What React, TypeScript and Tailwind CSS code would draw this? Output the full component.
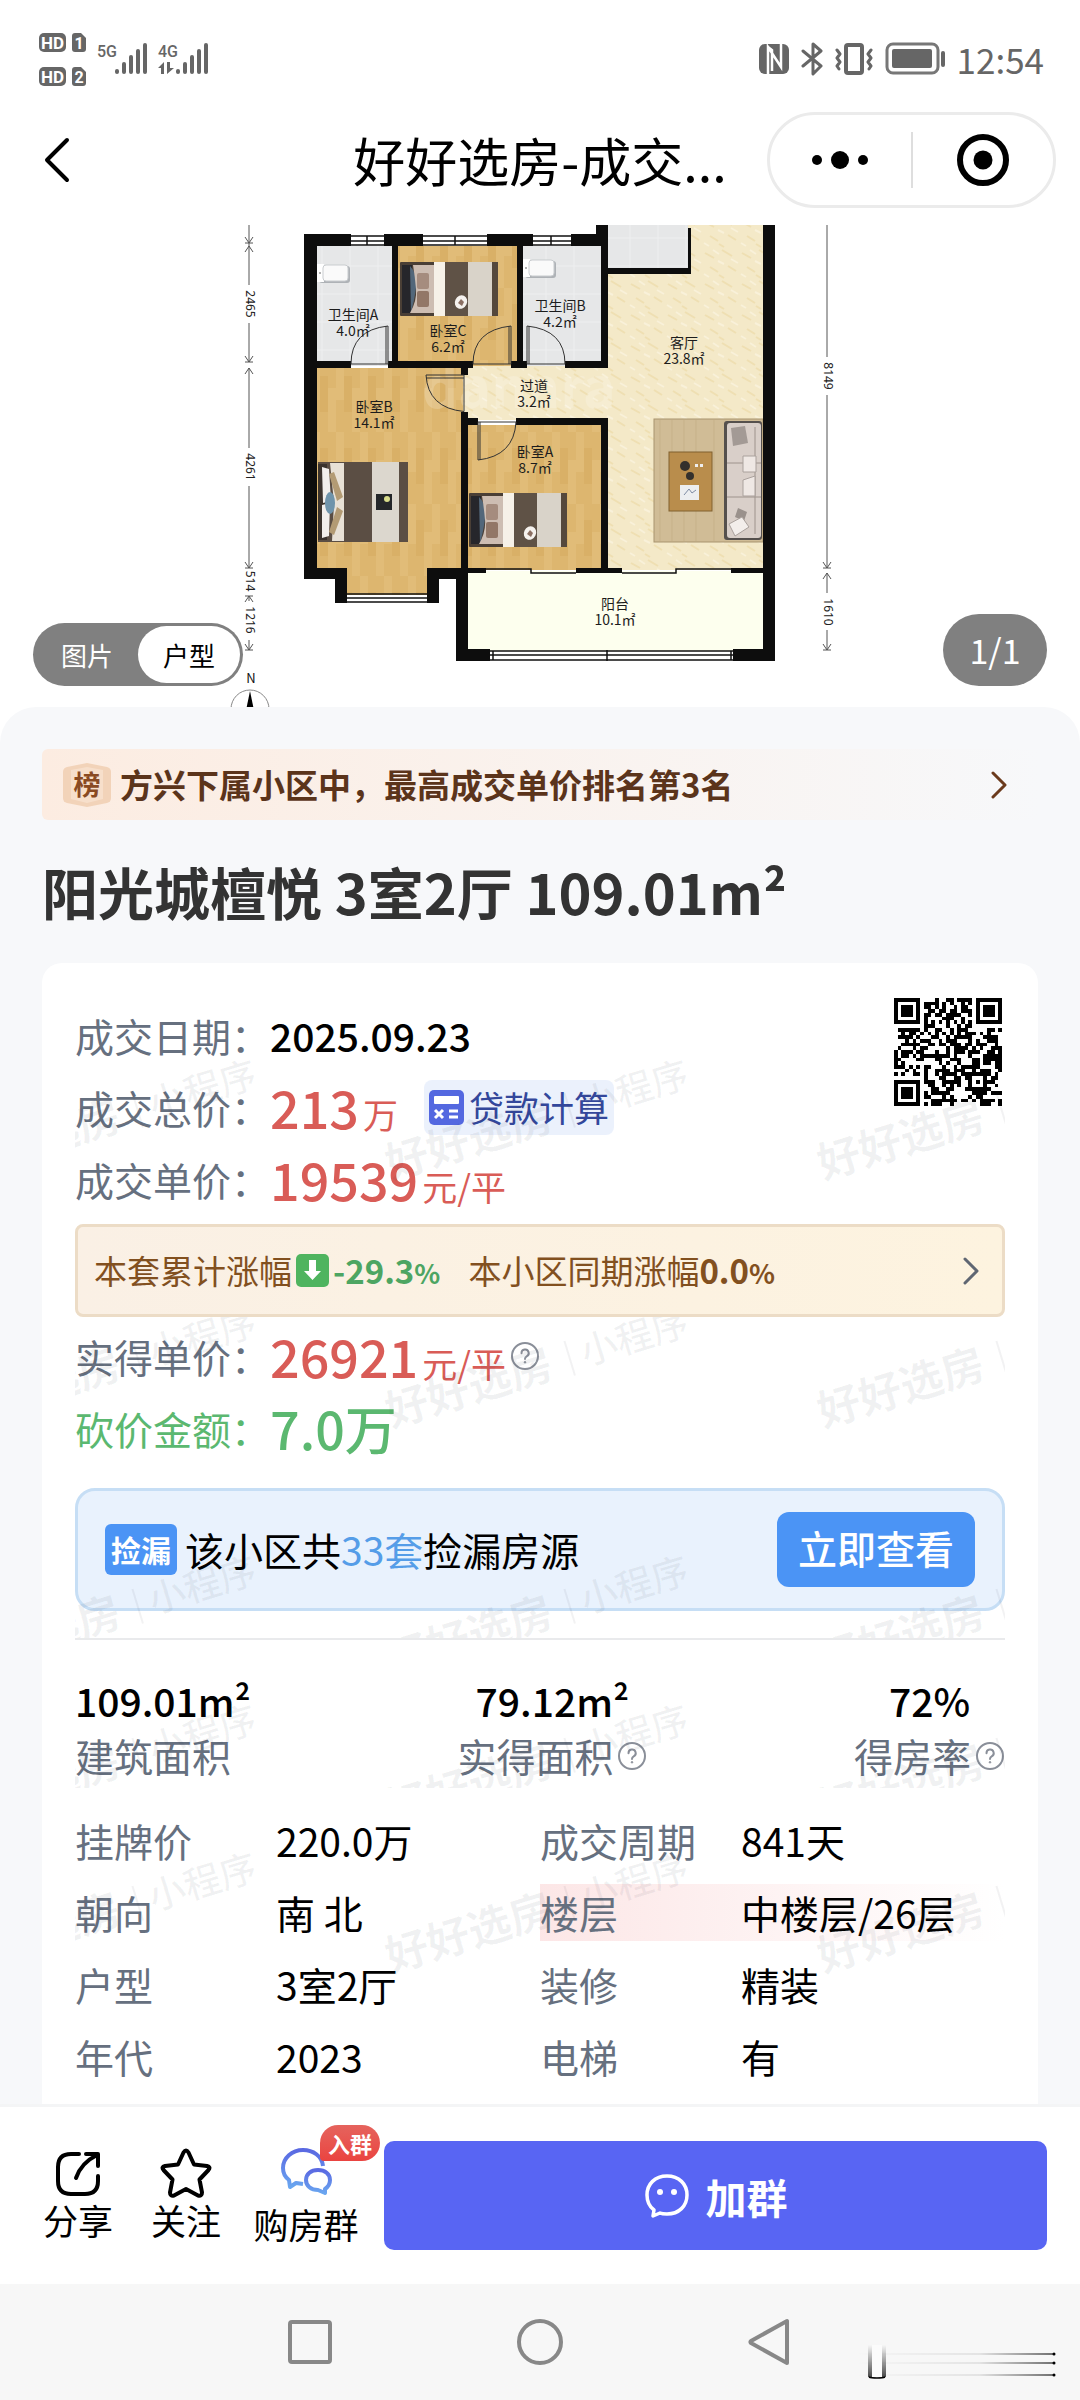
import type { ReactNode } from "react";
import { clsx } from "clsx";

const dealRows = [
  { label: "挂牌价", value: "220.0万" },
  { label: "成交周期", value: "841天" },
  { label: "朝向", value: "南 北" },
  { label: "楼层", value: "中楼层/26层", highlight: true },
  { label: "户型", value: "3室2厅" },
  { label: "装修", value: "精装" },
  { label: "年代", value: "2023" },
  { label: "电梯", value: "有" },
];

const rooms = [
  { name: "卫生间A", area: "4.0㎡", x: 353, y: 320 },
  { name: "卧室C", area: "6.2㎡", x: 448, y: 336 },
  { name: "卫生间B", area: "4.2㎡", x: 560, y: 311 },
  { name: "客厅", area: "23.8㎡", x: 684, y: 348 },
  { name: "过道", area: "3.2㎡", x: 534, y: 391 },
  { name: "卧室B", area: "14.1㎡", x: 374, y: 412 },
  { name: "卧室A", area: "8.7㎡", x: 535, y: 457 },
  { name: "阳台", area: "10.1㎡", x: 615, y: 609 },
];

// x, y, width, height
const walls = [
  [304, 234, 13, 345], [304, 234, 47, 12], [384, 234, 39, 12], [487, 234, 46, 12], [571, 234, 37, 12],
  [596, 225, 12, 21], [392, 246, 6, 122], [517, 246, 6, 122], [601, 225, 7, 143],
  [317, 361, 34, 7], [388, 361, 85, 7], [511, 361, 16, 7], [565, 361, 43, 7],
  [461, 368, 7, 7], [461, 412, 7, 160], [468, 418, 10, 7], [516, 418, 92, 7], [601, 418, 7, 155],
  [608, 268, 83, 6], [688, 228, 3, 44], [763, 225, 12, 436],
  [304, 568, 43, 11], [335, 568, 12, 35], [427, 568, 41, 11], [427, 568, 12, 35], [456, 568, 12, 93],
  [461, 568, 25, 5], [576, 568, 46, 5], [731, 568, 32, 5], [456, 649, 34, 12], [733, 649, 42, 12],
];

const QR_SIZE = 29;

function isDark(x: number, y: number) {
  const finder = (fx: number, fy: number) => {
    const d = Math.max(Math.abs(x - fx), Math.abs(y - fy));
    return d > 4 ? null : d !== 2 && d !== 4;
  };
  for (const [fx, fy] of [[3, 3], [25, 3], [3, 25]]) {
    const hit = finder(fx, fy);
    if (hit !== null) return hit;
  }
  const a = Math.max(Math.abs(x - 22), Math.abs(y - 22));
  if (a <= 2) return a !== 1;
  if (x === 6 || y === 6) return (x + y) % 2 === 0;
  const n = Math.sin(x * 127.1 + y * 311.7) * 43758.5453;
  return n - Math.floor(n) > 0.47;
}

function QrCode() {
  const cells: string[] = [];
  for (let y = 0; y < QR_SIZE; y++) {
    for (let x = 0; x < QR_SIZE; x++) {
      if (isDark(x, y)) cells.push(`M${x} ${y}h1v1h-1z`);
    }
  }
  return (
    <svg className="mt-[3px] mr-[3px] size-[108px] shrink-0" viewBox="0 0 29 29" shapeRendering="crispEdges">
      <path d={cells.join("")} fill="#000" />
    </svg>
  );
}

function Watermark({ rows = 1 }: { rows?: number }) {
  return (
    <svg className="pointer-events-none absolute inset-0 h-full w-full" aria-hidden="true">
      {[145, 393, 641].slice(0, rows).map((y) =>
        [-38, 394, 826].map((x) => (
          <g key={`${x}-${y}`} transform={`translate(${x} ${y}) rotate(-17)`} fill="#1e293b" fillOpacity="0.06" textAnchor="middle">
            <text y="15" fontSize="43" fontWeight="700">好好选房</text>
            <rect x="104" y="-17" width="2" height="36" />
            <text x="173" y="13" fontSize="37" fontWeight="500">小程序</text>
          </g>
        ))
      )}
    </svg>
  );
}

function Help() {
  return (
    <svg className="size-[30px] shrink-0" viewBox="0 0 30 30" fill="none" stroke="#8a8f99" strokeWidth="2">
      <circle cx="15" cy="15" r="13" />
      <path d="M11.5 12.2a3.6 3.6 0 1 1 5.2 3.1c-1.2.7-1.7 1.3-1.7 2.7" strokeLinecap="round" />
      <circle cx="15" cy="21.3" r="0.8" fill="#8a8f99" strokeWidth="1" />
    </svg>
  );
}

function Chevron({ color }: { color: string }) {
  return (
    <svg className="h-[28px] w-[18px] shrink-0" viewBox="0 0 18 28" fill="none" stroke={color} strokeWidth="3" strokeLinecap="round" strokeLinejoin="round">
      <path d="M3 2l12 12L3 26" />
    </svg>
  );
}

function Bed({ x, y }: { x: number; y: number }) {
  return (
    <g transform={`translate(${x} ${y})`}>
      <rect width="98" height="54" rx="1" fill="#4a3f36" />
      <rect x="2" y="3" width="10" height="48" fill="#26262b" />
      <path d="M10 4q8 8 6 22t-5 24z" fill="#52677a" />
      <path d="M13 3h21v48H10q7-12 6-24t-3-24z" fill="#cdbdb2" />
      <rect x="17" y="11" width="12" height="16" rx="2" fill="#a58c7e" />
      <rect x="17" y="29" width="12" height="16" rx="2" fill="#927767" />
      <rect x="34" width="11" height="54" fill="#f6f1e8" />
      <rect x="45" width="23" height="54" fill="#5f5246" />
      <rect x="68" width="24" height="54" fill="#d9d3c9" />
      <rect x="92" width="6" height="54" fill="#55483c" />
      <ellipse cx="61" cy="40" rx="6" ry="7" fill="#f5f2ee" transform="rotate(25 61 40)" />
      <path d="M58 41l3-4 3 3-2 4z" fill="#8b6f62" />
    </g>
  );
}

function Toilet({ x, y }: { x: number; y: number }) {
  return (
    <g transform={`translate(${x} ${y})`}>
      <rect x="2" y="2" width="31" height="17" rx="3" fill="#aeb2b6" />
      <rect width="7" height="18" fill="#fff" />
      <rect x="6" y="1" width="25" height="16" rx="3" fill="#fafafa" stroke="#c9cccf" />
      <circle cx="3" cy="9" r="1" fill="#999" />
    </g>
  );
}

function Dimension({ x, y, children }: { x: number; y: number; children: ReactNode }) {
  return (
    <text transform={`translate(${x - 3} ${y}) rotate(90)`} textAnchor="middle" fontSize="12" fill="#222" fontFamily="'Noto Sans', sans-serif">
      {children}
    </text>
  );
}

function FloorPlan() {
  return (
    <svg className="h-[482px] w-[640px]" viewBox="220 225 640 482" role="img" aria-label="户型图">
      <defs>
        <pattern id="wood" width="24" height="72" patternUnits="userSpaceOnUse">
          <rect width="24" height="72" fill="#ddb66f" />
          <path d="M0 0h8v40H0zM16 28h8v44h-8z" fill="#e1bc78" />
          <path d="M8 16h8v36H8z" fill="#d9b067" />
        </pattern>
        <pattern id="tile" width="28" height="28" patternUnits="userSpaceOnUse">
          <rect width="28" height="28" fill="#e6e7e8" />
          <path d="M0 14h28M14 0v28" stroke="#eff0f1" />
        </pattern>
        <pattern id="marble" width="37" height="31" patternUnits="userSpaceOnUse">
          <rect width="37" height="31" fill="#f4e9c8" />
          <path d="M2 5l9 5M19 2l10 6M7 19l8 5M25 18l8 5M16 27l5 3" stroke="#efdfb2" strokeWidth="2" />
          <path d="M10 2l6 4M1 26l5 3M28 11l7 4M15 13l6 3" stroke="#f9f1d9" strokeWidth="2" />
        </pattern>
      </defs>

      {/* floors */}
      <rect x="317" y="368" width="146" height="200" fill="url(#wood)" />
      <rect x="347" y="560" width="80" height="35" fill="url(#wood)" />
      <rect x="398" y="246" width="120" height="120" fill="url(#wood)" />
      <rect x="468" y="425" width="134" height="145" fill="url(#wood)" />
      <rect x="317" y="246" width="76" height="120" fill="url(#tile)" />
      <rect x="523" y="246" width="79" height="120" fill="url(#tile)" />
      <rect x="608" y="225" width="155" height="345" fill="url(#marble)" />
      <rect x="463" y="366" width="146" height="54" fill="url(#marble)" />
      <rect x="608" y="225" width="80" height="44" fill="url(#tile)" />
      <rect x="468" y="571" width="295" height="80" fill="#fdffee" />

      {/* furniture */}
      <Toilet x={317} y={264} />
      <Toilet x={523} y={259} />
      <Bed x={400} y={262} />
      <Bed x={469} y={493} />
      <rect x="318" y="462" width="90" height="80" fill="#5b4e44" />
      <rect x="318" y="464" width="9" height="76" fill="#3b332d" />
      <path d="M322 467l7 2 2 32-8 2zM322 505l8-2-1 33-7 2z" fill="#f2efec" />
      <path d="M330 463h14v78h-12l2-38z" fill="#e8e1d6" />
      <path d="M329 474l5-2 9 25-6 4zM337 507l6 4-9 24-5-3z" fill="#b39b74" />
      <ellipse cx="330" cy="503" rx="5" ry="11" fill="#6f94ab" />
      <rect x="372" y="462" width="27" height="80" fill="#dcd7ce" />
      <rect x="376" y="494" width="16" height="16" fill="#25272a" />
      <circle cx="387" cy="499" r="3" fill="#d9dd8c" />
      <rect x="654" y="419" width="109" height="123" fill="#d0bc96" stroke="#a8946e" />
      <path d="M660 420v121M672 420v121M684 420v121M696 420v121M714 420v121" stroke="#c6b189" />
      <rect x="669" y="452" width="43" height="59" fill="#b98d4c" stroke="#80602f" />
      <circle cx="685" cy="466" r="5" fill="#34302c" />
      <circle cx="690" cy="476" r="4" fill="#34302c" />
      <path d="M695 464h3v3h-3zM700 464h3v3h-3z" fill="#eee" />
      <rect x="680" y="485" width="19" height="15" fill="#eceef0" />
      <path d="M684 495l5-6 3 4 4-3" stroke="#7d8ba3" fill="none" />
      <rect x="724" y="421" width="38" height="119" rx="3" fill="#55504d" />
      <rect x="727" y="423" width="34" height="115" rx="3" fill="#d9cfc9" />
      <path d="M727 463h34M727 497h34M755 427v107" stroke="#9e938c" />
      <path d="M731 428l14-2 3 17-15 3z" fill="#a39a95" />
      <path d="M743 456h13v16h-13zM743 480l12-4v20h-12z" fill="#efe8e4" stroke="#aaa19c" />
      <path d="M738 508l9 4-3 9-9-4z" fill="#9a918c" />
      <path d="M729 524l13-7 7 10-14 9z" fill="#f3eeeb" stroke="#aaa19c" />

      {/* faint stamp across the hallway */}
      <text x="422" y="408" fontSize="56" fontWeight="700" fill="#fff" fillOpacity="0.18">danara</text>

      <g fill="#0d0d0d">
        {walls.map(([x, y, w, h]) => (
          <rect key={`${x}-${y}-${w}-${h}`} x={x} y={y} width={w} height={h} />
        ))}
      </g>

      {/* windows */}
      <g fill="none" stroke="#111" strokeWidth="1.5">
        <path d="M351 236h33M351 241h33M351 245h33M367 236v9" />
        <path d="M423 236h64M423 241h64M423 245h64M455 236v9" />
        <path d="M533 236h38M533 241h38M533 245h38M551 236v9" />
        <path d="M347 594h80M347 598h80M347 602h80" />
        <path d="M486 569h45v4h45M622 573h54v-4h55" />
        <path d="M490 651h243M490 655h243M490 660h243M493 651v9M607 650v11M731 651v9" />
      </g>

      {/* doors */}
      <g fill="none" stroke="#333" strokeWidth="1">
        <path d="M351 364h37v-38M388 326q-37 4-37 38M386 326v38" />
        <path d="M473 364h38v-38M511 326q-38 4-38 38M509 326v38" />
        <path d="M565 364h-38v-38M527 326q38 4 38 38M529 326v38" />
        <path d="M464 375h-38M426 375q2 33 38 36.500V375M426 378h38" />
        <path d="M478 422h38M478 422v38q36-4 38-38M480 422v38" />
      </g>

      <g fontSize="14" textAnchor="middle" fill="#1c1c1c">
        {rooms.map((room) => (
          <text key={room.name} x={room.x} y={room.y}>
            {room.name}
            <tspan x={room.x} dy="16">{room.area}</tspan>
          </text>
        ))}
      </g>

      {/* dimension lines */}
      <g fill="none" stroke="#555" strokeWidth="1">
        <path d="M249 225v60M249 323v39M249 368v80M249 486v82M249 596v5M249 640v10" />
        <path d="M245 237l4 6 4-6M245 243h8M245 252l4-6 4 6M245 356l4 6 4-6M245 362h8M245 374l4-6 4 6M245 562l4 6 4-6M245 568h8M245 602l4-6 4 6M245 596h8M245 644l4 6 4-6M245 650h8" />
        <path d="M827 225v132M827 395v173M827 573v20M827 630v20" />
        <path d="M823 562l4 6 4-6M823 568h8M823 579l4-6 4 6M823 644l4 6 4-6M823 650h8" />
      </g>
      <Dimension x={249} y={304}>2465</Dimension>
      <Dimension x={249} y={467}>4261</Dimension>
      <Dimension x={249} y={581}>514</Dimension>
      <Dimension x={249} y={620}>1216</Dimension>
      <Dimension x={827} y={376}>8149</Dimension>
      <Dimension x={827} y={612}>1610</Dimension>

      <text x="251" y="683" fontSize="13" textAnchor="middle" fill="#111">N</text>
      <circle cx="250" cy="709" r="19" fill="none" stroke="#888" />
      <path d="M250 691l3.500 17h-7z" fill="#000" />
    </svg>
  );
}

function StatusBar() {
  return (
    <div className="flex h-[105px] items-center justify-between pt-3 pr-9 pl-9">
      <svg className="h-[60px] w-[176px]" viewBox="36 28 176 60" fill="#666">
        {[32, 66].map((y, i) => (
          <g key={y} fontWeight="700" textAnchor="middle" fontFamily="Roboto, sans-serif">
            <rect x="39" y={y} width="27" height="19" rx="5" />
            <text x="52.500" y={y + 15.5} fontSize="17" fill="#fff">HD</text>
            <path d={`M75 ${y}h6l5 5v11a3 3 0 0 1-3 3h-8a3 3 0 0 1-3-3v-13a3 3 0 0 1 3-3z`} />
            <text x="79" y={y + 15.5} fontSize="16" fill="#fff">{i + 1}</text>
          </g>
        ))}
        <g fontSize="16" fontWeight="500" fontFamily="Roboto, sans-serif">
          <text x="97" y="56">5G</text>
          <text x="158" y="56">4G</text>
        </g>
        {[115, 176].map((x) =>
          [5, 12, 19, 25, 31].map((h, i) => (
            <rect key={`${x}-${h}`} x={x + i * 7} y={73 - h} width="4" height={h} rx="2" />
          ))
        )}
        <path d="M158 67l6-6v12h-3v-6zM167 61h3v6h4l-7 6z" />
      </svg>

      <div className="flex items-center gap-3 text-[#666]">
        <svg className="h-[34px] w-[30px]" viewBox="0 0 30 34">
          <rect y="2" width="30" height="30" rx="6" fill="#666" />
          <path d="M9 32V5l13 20V8M9 5l4 3v21M22 25V2" fill="none" stroke="#fff" strokeWidth="2.500" />
        </svg>
        <svg className="h-[34px] w-[22px]" viewBox="0 0 22 34" fill="none" stroke="#666" strokeWidth="3" strokeLinejoin="round" strokeLinecap="round">
          <path d="M2 9l18 15-8 8V2l8 7L2 24" />
        </svg>
        <svg className="h-[34px] w-[38px]" viewBox="0 0 38 34" fill="none" stroke="#666" strokeWidth="3" strokeLinejoin="round" strokeLinecap="round">
          <rect x="11" y="3" width="16" height="28" rx="2" strokeWidth="4" />
          <path d="M2 8l3 4-3 4 3 4-3 4 2 3M36 8l-3 4 3 4-3 4 3 4-2 3" />
        </svg>
        <svg className="h-[34px] w-[60px]" viewBox="0 0 60 34">
          <rect x="2" y="2" width="51" height="29" rx="6" fill="none" stroke="#777" strokeWidth="3" />
          <rect x="7" y="7" width="40" height="19" rx="2" fill="#666" />
          <rect x="56" y="9" width="4" height="16" rx="2" fill="#666" />
        </svg>
        <time className="text-[35px] leading-[46px]">12:54</time>
      </div>
    </div>
  );
}

function Header() {
  return (
    <header className="grid grid-cols-[1fr_auto_1fr] items-center px-6 pt-[7px] pb-[17px]">
      <button type="button" aria-label="返回" className="w-fit pl-[18px]">
        <svg className="h-[48px] w-[30px]" viewBox="0 0 30 48" fill="none" stroke="#000" strokeWidth="4" strokeLinecap="round" strokeLinejoin="round">
          <path d="M25 4L5 24l20 20" />
        </svg>
      </button>
      <h1 className="text-[52px] leading-[72px] text-black">好好选房-成交...</h1>
      <div className="flex h-24 w-[289px] items-center justify-self-end rounded-full border-[3px] border-[#ebebeb]">
        <button type="button" aria-label="更多" className="flex flex-1 justify-center">
          <svg className="h-[20px] w-[58px]" viewBox="0 0 58 20">
            <circle cx="6" cy="10" r="5" />
            <circle cx="29" cy="10" r="9" />
            <circle cx="52" cy="10" r="5" />
          </svg>
        </button>
        <span className="h-14 w-[2px] bg-[#dedede]" />
        <button type="button" aria-label="关闭" className="flex flex-1 justify-center">
          <svg className="size-[54px]" viewBox="0 0 54 54">
            <circle cx="27" cy="27" r="23" fill="none" stroke="#000" strokeWidth="6" />
            <circle cx="27" cy="27" r="9.500" />
          </svg>
        </button>
      </div>
    </header>
  );
}

function PriceRow({ label, labelClass, children }: { label: string; labelClass?: string; children: ReactNode }) {
  return (
    <div className="flex h-[72px] items-center">
      <dt className={clsx("w-[195px] shrink-0 whitespace-nowrap", labelClass ?? "text-[#66707f]")}>{label}：</dt>
      <dd className="flex items-center">{children}</dd>
    </div>
  );
}

function Price({ amount, unit }: { amount: string; unit: string }) {
  return (
    <span className="flex items-baseline gap-1 text-[#d95c57]">
      <b className="text-[52px] leading-[72px] font-medium">{amount}</b>
      <span className="text-[35px]">{unit}</span>
    </span>
  );
}

function BottomBar() {
  return (
    <footer className="flex items-start gap-6 border-t-[3px] border-[#f4f5f6] bg-white pt-[34px] pr-[33px] pb-[34px] pl-9 text-[35px] leading-[42px] text-black">
      <button type="button" className="flex w-[84px] shrink-0 flex-col items-center pt-1.5">
        <svg className="size-[52px]" viewBox="0 0 52 52" fill="none" stroke="#000" strokeWidth="4" strokeLinecap="round" strokeLinejoin="round">
          <path d="M27 7H19Q6 7 6 20v14q0 13 13 13h14q13 0 13-13v-5" />
          <path d="M24 31Q29 16 45 8M34 7h12v12" />
        </svg>
        分享
      </button>
      <button type="button" className="flex w-[84px] shrink-0 flex-col items-center pt-1.5">
        <svg className="size-[52px]" viewBox="0 0 52 52" fill="none" stroke="#000" strokeWidth="4" strokeLinejoin="round">
          <path d="M23.500 5.500q2.500-4 5 0l5.500 12 13 1.500q4 1 1.500 4l-9 9.500 2.500 13q0 4-4 3L26 42l-12 6.500q-4 1-4-3l2.500-13-9-9.500q-2.500-3 1.500-4l13-1.500z" />
        </svg>
        关注
      </button>
      <button type="button" className="relative flex w-[108px] shrink-0 flex-col items-center gap-1 pt-1.5">
        <svg className="size-[52px]" viewBox="0 0 52 52" fill="none" strokeWidth="4" strokeLinejoin="round">
          <defs>
            <linearGradient id="bubble" x1="0" y1="0" x2="0" y2="1">
              <stop offset="0" stopColor="#5a69e2" />
              <stop offset="1" stopColor="#6aa6f0" />
            </linearGradient>
          </defs>
          <path d="M43 19C42 9 33 3 23 3 12 3 3 11 3 21c0 5 2 9 6 12l1 7 6-4 7 1" stroke="url(#bubble)" />
          <path d="M45 42c3-2 5-5 5-9 0-6-5-10-12-10s-12 4-12 10 5 10 12 10l7 3z" stroke="url(#bubble)" />
        </svg>
        购房群
        <span className="absolute -top-4 -right-5 rounded-[18px] rounded-bl-sm bg-linear-to-b from-[#e5635d] to-[#ea4340] px-[8px] text-[22px] leading-9 font-bold text-white">
          入群
        </span>
      </button>
      <button type="button" className="flex h-[109px] flex-1 items-center justify-center gap-4 rounded-[10px] bg-[#5865f3] text-[41px] font-bold text-white">
        <svg className="size-[46px]" viewBox="0 0 46 46" fill="none" stroke="#fff" strokeWidth="3.500" strokeLinejoin="round">
          <path d="M23 3C11 3 3 11 3 22c0 7 3 12 7 15l-1 6 7-3c2 1 4 1 7 1 12 0 20-8 20-19S35 3 23 3z" />
          <circle cx="16" cy="19" r="3" fill="#fff" stroke="none" />
          <circle cx="30" cy="19" r="3" fill="#fff" stroke="none" />
        </svg>
        加群
      </button>
    </footer>
  );
}

function SystemNav() {
  return (
    <nav className="relative flex h-[116px] items-center justify-center gap-[186px] bg-[#f7f7f7]">
      <button type="button" aria-label="最近任务">
        <svg className="size-11" viewBox="0 0 44 44" fill="none" stroke="#888" strokeWidth="4">
          <rect x="2" y="2" width="40" height="40" rx="2" />
        </svg>
      </button>
      <button type="button" aria-label="主屏幕">
        <svg className="size-11 overflow-visible" viewBox="0 0 44 44" fill="none" stroke="#888" strokeWidth="4">
          <circle cx="22" cy="22" r="21" />
        </svg>
      </button>
      <button type="button" aria-label="返回上一级">
        <svg className="size-11 overflow-visible" viewBox="0 0 44 44" fill="none" stroke="#888" strokeWidth="4" strokeLinejoin="round">
          <path d="M39 1v42L3 23q-1-1 0-2z" />
        </svg>
      </button>
      <svg className="absolute right-6 bottom-4 h-[42px] w-[250px]" viewBox="0 0 250 42" aria-hidden="true">
        <defs>
          <linearGradient id="streak">
            <stop offset="0.200" stopColor="#000" stopOpacity="0" />
            <stop offset="0.700" stopColor="#000" stopOpacity="0.080" />
            <stop offset="1" stopColor="#000" stopOpacity="0.550" />
          </linearGradient>
          <linearGradient id="drip" x1="0" y1="0" x2="0" y2="1">
            <stop offset="0" stopColor="#000" stopOpacity="0" />
            <stop offset="1" stopColor="#000" stopOpacity="0.700" />
          </linearGradient>
        </defs>
        {[11, 20, 32].map((y) => (
          <g key={y}>
            <rect y={y} width="248" height="2" fill="url(#streak)" />
            <circle cx="248" cy={y + 1} r="1.500" />
          </g>
        ))}
        <rect x="66" y="3" width="10" height="32" fill="#fbfbfb" />
        <rect x="62" y="3" width="4" height="32" fill="url(#drip)" />
        <rect x="76" y="3" width="4" height="32" fill="url(#drip)" />
        <path d="M63 35q2 1 8 1t8-1" fill="none" stroke="#000" strokeWidth="1.500" />
      </svg>
    </nav>
  );
}

export default function App() {
  return (
    <div className="w-full bg-white font-['Noto_Sans_CJK_SC',sans-serif]">
      <StatusBar />
      <Header />

      <section className="relative flex justify-center overflow-hidden">
        <FloorPlan />
        <div className="absolute bottom-[21px] left-[33px] flex rounded-full bg-[#808080] p-[3px] text-[26px] leading-[57px]">
          <button type="button" className="w-[102px] text-white">图片</button>
          <button type="button" className="w-[102px] rounded-full bg-white text-black">户型</button>
        </div>
        <span className="absolute right-[33px] bottom-[21px] w-[104px] rounded-full bg-[#808080] text-center text-[34px] leading-[72px] text-white">
          1/1
        </span>
      </section>

      <main className="rounded-t-[36px] bg-[#f7f8fa] px-[42px] pt-[42px]">
        <a href="#rank" className="flex h-[71px] items-center rounded-md bg-linear-to-r from-[#fcece1] to-[#f7f8fa] pr-[30px] pl-5 text-[33px] font-bold text-[#5b341b]">
          <svg className="mr-2 h-[44px] w-[50px]" viewBox="0 0 50 44">
            <path d="M5 4L25 0l20 4q4 1 4 5v26q0 4-4 5L25 44 5 40q-4-1-4-5V9q0-4 4-5z" fill="#f2d3b9" />
            <path d="M9 7l16-3 16 3v29l-16 4-16-4z" fill="#f7dfcb" />
            <text x="25" y="32" fontSize="27" fontWeight="700" textAnchor="middle" fill="#8a4a22">榜</text>
          </svg>
          <span className="flex-1">方兴下属小区中，最高成交单价排名第3名</span>
          <Chevron color="#6b3a1c" />
        </a>

        <h2 className="mt-[31px] mb-8 text-[56px] leading-[80px] font-bold text-[#333]">阳光城檀悦 3室2厅 109.01m²</h2>

        <div className="rounded-t-[20px] bg-white px-[33px] pt-8 text-[39px]">
          <section className="relative overflow-hidden border-b-2 border-[#e9eaec] pb-[27px]">
            <Watermark rows={3} />
            <div className="flex">
              <dl className="flex-1 pt-1">
                <PriceRow label="成交日期">
                  <span className="font-medium text-black">2025.09.23</span>
                </PriceRow>
                <PriceRow label="成交总价">
                  <Price amount="213" unit="万" />
                  <button type="button" className="ml-[26px] flex h-[55px] items-center gap-[5px] rounded-lg bg-[#e6edfb]/80 px-[5px] text-[35px] text-[#33479b]">
                    <svg className="size-[35px]" viewBox="0 0 35 35">
                      <rect width="35" height="35" rx="5" fill="#5468e0" />
                      <rect x="5" y="6" width="25" height="8" rx="1" fill="#fff" />
                      <path d="M6 20l8 8M14 20l-8 8M20 21h9M20 27h9" stroke="#fff" strokeWidth="3" />
                    </svg>
                    贷款计算
                  </button>
                </PriceRow>
                <PriceRow label="成交单价">
                  <Price amount="19539" unit="元/平" />
                </PriceRow>
              </dl>
              <QrCode />
            </div>

            <a href="#trend" className="relative mt-[9px] flex h-[93px] items-center rounded-lg border-[3px] border-[#ecdcc6] bg-linear-to-r from-[#faf0e5] to-[#fdf3df] pr-[22px] pl-4 text-[33px] text-[#82501f]">
              本套累计涨幅
              <svg className="ml-1 size-[33px]" viewBox="0 0 33 33">
                <rect width="33" height="33" rx="5" fill="#4fb45f" />
                <path d="M13 6h7v11h5l-8.500 9L8 17h5z" fill="#fff" />
              </svg>
              <b className="ml-1 text-[#4da562]">-29.3<span className="text-[27px]">%</span></b>
              <span className="ml-7 flex-1">
                本小区同期涨幅<b>0.0<span className="text-[27px]">%</span></b>
              </span>
              <Chevron color="#5f6672" />
            </a>

            <dl className="mt-[3px]">
              <PriceRow label="实得单价">
                <Price amount="26921" unit="元/平" />
                <span className="ml-1"><Help /></span>
              </PriceRow>
              <PriceRow label="砍价金额" labelClass="text-[#5bb870]">
                <span className="text-[52px] leading-[72px] font-medium text-[#5bb870]">7.0万</span>
              </PriceRow>
            </dl>

            <div className="mt-6 flex h-[123px] items-center rounded-[20px] border-[3px] border-[#c6def5] bg-[#dbe9fc]/60 px-[27px] text-black">
              <span className="mr-2 w-[72px] rounded-md bg-[#4b94f5] text-center text-[30px] leading-[51px] font-bold text-white">捡漏</span>
              <p className="flex-1">
                该小区共<span className="text-[#559de8]">33套</span>捡漏房源
              </p>
              <button type="button" className="h-[75px] w-[198px] rounded-xl bg-[#4b94f5] pb-1 leading-[71px] font-medium text-white">立即查看</button>
            </div>
          </section>

          <section className="relative flex justify-between overflow-hidden pt-[33px] pb-[5px] leading-[55px]">
            <Watermark />
            <div>
              <p className="font-medium text-black">109.01m²</p>
              <p className="text-[#66707f]">建筑面积</p>
            </div>
            <div className="text-center">
              <p className="font-medium text-black">79.12m²</p>
              <p className="flex items-center gap-1 text-[#66707f]">实得面积<Help /></p>
            </div>
            <div className="text-center">
              <p className="font-medium text-black">72%</p>
              <p className="flex items-center gap-1 text-[#66707f]">得房率<Help /></p>
            </div>
          </section>

          <section className="relative overflow-hidden pt-4 pb-3">
            <Watermark />
            <dl className="grid grid-cols-2">
              {dealRows.map((row) => (
                <div key={row.label} className="flex h-[72px] items-center">
                  <div className={clsx("flex w-full leading-[57px]", row.highlight && "bg-linear-to-r from-[#fbdcdc]/70 to-transparent")}>
                    <dt className="w-[201px] shrink-0 text-[#66707f]">{row.label}</dt>
                    <dd className="text-black">{row.value}</dd>
                  </div>
                </div>
              ))}
            </dl>
          </section>
        </div>
      </main>

      <BottomBar />
      <SystemNav />
    </div>
  );
}
